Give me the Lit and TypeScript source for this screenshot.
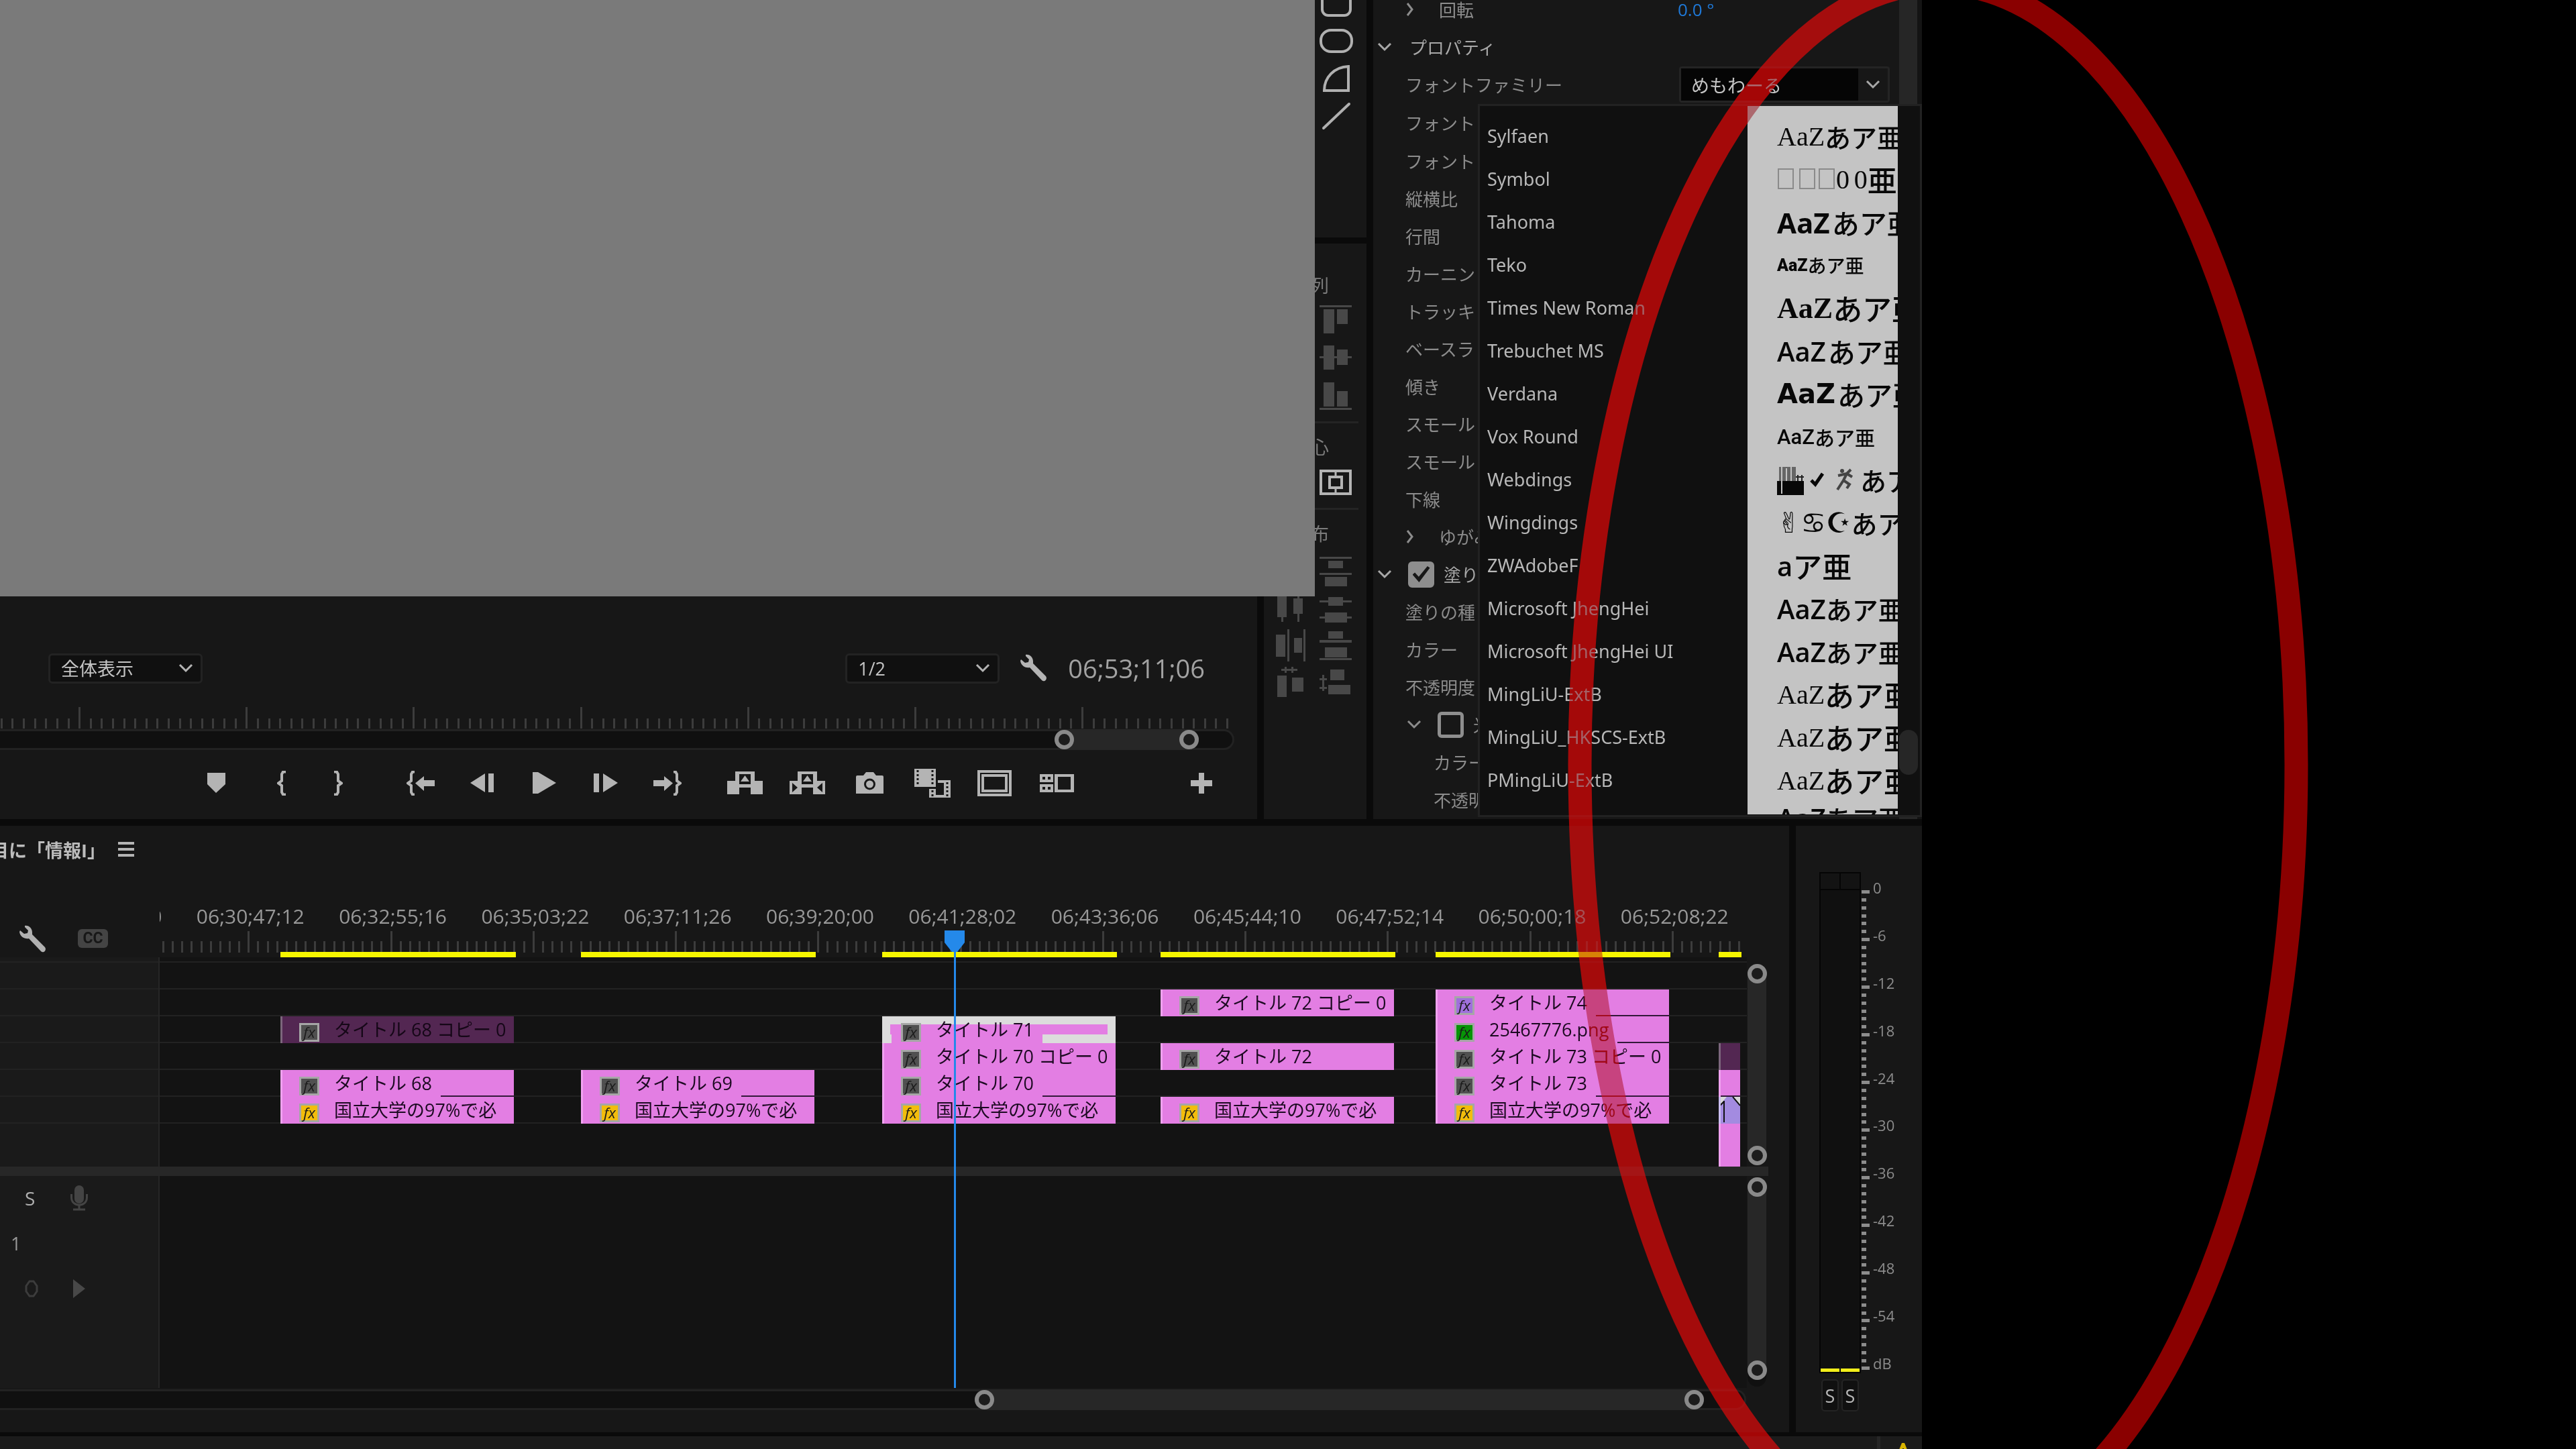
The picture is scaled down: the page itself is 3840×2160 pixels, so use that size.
import { LitElement, html, css, svg, nothing } from "lit";
import { customElement } from "lit/decorators.js";
import { classMap } from "lit/directives/class-map.js";
import { styleMap } from "lit/directives/style-map.js";

type Clip = {
  left: number;
  width: number;
  name?: string;
  fx?: string;
  line?: boolean;
  kind?: string;
};

const LANE_WIDTH = 2366;
const pct = (value: number, total: number) => `${(value / total) * 100}%`;

const G1 = 180, G2 = 628, G3 = 1077, G4 = 1492, G5 = 1902, G6 = 2324;
const W = 348;
const LONG = "国立大学の97%で必";

const TRACKS: Clip[][] = [
  [],
  [
    { left: G4, width: W, name: "タイトル 72 コピー 0", fx: "gray" },
    { left: G5, width: W, name: "タイトル 74", fx: "violet", line: true },
  ],
  [
    { left: G1, width: W, name: "タイトル 68 コピー 0", fx: "gray", kind: "off" },
    { left: G3, width: W, name: "タイトル 71", fx: "gray", kind: "selected" },
    { left: G5, width: W, name: "25467776.png", fx: "green", line: true },
  ],
  [
    { left: G3, width: W, name: "タイトル 70 コピー 0", fx: "gray" },
    { left: G4, width: W, name: "タイトル 72", fx: "gray" },
    { left: G5, width: W, name: "タイトル 73 コピー 0", fx: "gray" },
    { left: G6, width: 32, kind: "off" },
  ],
  [
    { left: G1, width: W, name: "タイトル 68", fx: "gray", line: true },
    { left: G2, width: W, name: "タイトル 69", fx: "gray", line: true },
    { left: G3, width: W, name: "タイトル 70", fx: "gray", line: true },
    { left: G5, width: W, name: "タイトル 73", fx: "gray", line: true },
    { left: G6, width: 32, line: true },
  ],
  [
    { left: G1, width: W, name: LONG, fx: "gold" },
    { left: G2, width: W, name: LONG, fx: "gold" },
    { left: G3, width: W, name: LONG, fx: "gold" },
    { left: G4, width: W, name: LONG, fx: "gold" },
    { left: G5, width: W, name: LONG, fx: "gold" },
    { left: G6, width: 32, kind: "lavender" },
  ],
  [{ left: G6, width: 32 }],
];

const RENDER_BARS = [
  [G1, 351], [G2, 350], [G3, 350], [G4, 350], [G5, 350], [G6, 34],
];

const TIMES = [
  "06;28;39;10", "06;30;47;12", "06;32;55;16", "06;35;03;22", "06;37;11;26",
  "06;39;20;00", "06;41;28;02", "06;43;36;06", "06;45;44;10", "06;47;52;14",
  "06;50;00;18", "06;52;08;22",
];

const FONTS: { name: string; latin?: string; style?: string; kana?: string; size?: string }[] = [
  { name: "Sylfaen", latin: "AaZ", style: "serif", kana: "あア亜", size: "m" },
  { name: "Symbol", style: "boxes", kana: "亜", size: "l" },
  { name: "Tahoma", latin: "AaZ", style: "bold", kana: "あア亜", size: "n" },
  { name: "Teko", latin: "AaZ", style: "tiny", kana: "あア亜", size: "xs" },
  { name: "Times New Roman", latin: "AaZ", style: "serif-bold", kana: "あア亜", size: "l" },
  { name: "Trebuchet MS", latin: "AaZ", style: "semi", kana: "あア亜", size: "n" },
  { name: "Verdana", latin: "AaZ", style: "wide", kana: "あア亜", size: "n" },
  { name: "Vox Round", latin: "AaZ", style: "round", kana: "あア亜", size: "s" },
  { name: "Webdings", style: "web", kana: "あア", size: "m" },
  { name: "Wingdings", latin: "✌♋☪", style: "wing", kana: "あア", size: "m" },
  { name: "ZWAdobeF", latin: "a", style: "semi", kana: "ア亜", size: "l" },
  { name: "Microsoft JhengHei", latin: "AaZ", style: "semi", kana: "あア亜", size: "m" },
  { name: "Microsoft JhengHei UI", latin: "AaZ", style: "semi", kana: "あア亜", size: "m" },
  { name: "MingLiU-ExtB", latin: "AaZ", style: "serif", kana: "あア亜", size: "l" },
  { name: "MingLiU_HKSCS-ExtB", latin: "AaZ", style: "serif", kana: "あア亜", size: "l" },
  { name: "PMingLiU-ExtB", latin: "AaZ", style: "serif", kana: "あア亜", size: "l" },
];

const icon = (w: number, h: number, body: unknown, cls = "") => html`<svg
  class="icon ${cls}" width=${w} height=${h} viewBox="0 0 ${w} ${h}" aria-hidden="true">${body}</svg>`;

const chevronDown = () =>
  icon(22, 14, svg`<path d="M2 2 L11 11 L20 2" fill="none" stroke="currentColor" stroke-width="3"/>`);
const chevronRight = () =>
  icon(22, 22, svg`<path d="M7 2 L14 11 L7 20" fill="none" stroke="currentColor" stroke-width="3"/>`);
const wrench = () =>
  icon(42, 42, svg`<path d="M9 1 C15 0 20 5 20 11 L20 14 L39 33 C42 37 37 43 33 39 L15 20 C9 21 2 18 1 10 L2 8 L8 13 L13 12 L14 8 L9 3 Z" fill="currentColor"/>`);

const ICONS = {
  marker: icon(27, 30, svg`<path d="M0 0H27V17L13 30L0 17Z" fill="currentColor"/>`),
  markIn: icon(14, 37, svg`<path d="M13 1.500H9L7 5V15L2 18.500L7 22V32L9 35.500H13" fill="none" stroke="currentColor" stroke-width="4"/>`),
  markOut: icon(14, 37, svg`<path d="M1 1.500H5L7 5V15L12 18.500L7 22V32L5 35.500H1" fill="none" stroke="currentColor" stroke-width="4"/>`),
  goIn: icon(42, 37, svg`<path d="M12 1.500H9L7 5V15L2 18.500L7 22V32L9 35.500H12" fill="none" stroke="currentColor" stroke-width="4"/><path d="M13 18.500L26 8V14H42V23H26V30Z" fill="currentColor"/>`),
  back: icon(36, 28, svg`<path d="M0 14L22 0V28ZM27 0H35V28H27Z" fill="currentColor"/>`),
  play: icon(35, 32, svg`<path d="M0 0H8L35 16L8 32H0Z" fill="currentColor"/>`),
  forward: icon(36, 28, svg`<path d="M36 14L14 0V28ZM0 0H8V28H0Z" fill="currentColor"/>`),
  goOut: icon(42, 37, svg`<path d="M30 1.500H33L35 5V15L40 18.500L35 22V32L33 35.500H30" fill="none" stroke="currentColor" stroke-width="4"/><path d="M29 18.500L16 8V14H0V23H16V30Z" fill="currentColor"/>`),
  lift: icon(53, 34, svg`<path d="M0 14H12V0H41V14H53V34H35V24H18V34H0Z" fill="currentColor"/><path d="M18 4H35V19H18Z" fill="#171717"/><path d="M26.500 6L33 15H20Z" fill="currentColor"/>`),
  extract: icon(53, 34, svg`<path d="M0 14H12V0H41V14H53V34H35V24H18V34H0Z" fill="currentColor"/><path d="M18 4H35V19H18ZM4 17L12 24L4 31ZM49 17L41 24L49 31Z" fill="#171717"/><path d="M26.500 6L33 15H20Z" fill="currentColor"/>`),
  camera: icon(41, 32, svg`<path d="M0 7Q0 5 2 5H11L15 0H26L30 5H39Q41 5 41 7V32H0Z" fill="currentColor"/><circle cx="20.500" cy="18" r="7" fill="none" stroke="#171717" stroke-width="3"/>`),
  film: icon(54, 43, svg`<path d="M0 0H32V27H0Z" fill="currentColor"/><path d="M5 2V26M27 2V26" stroke="#171717" stroke-width="3" stroke-dasharray="3 3"/><path d="M35 17H54V43H22V30H32V39H44V21H35Z" fill="currentColor"/><path d="M49 20V41M27 32V41" stroke="#171717" stroke-width="3" stroke-dasharray="3 3"/>`),
  safe: icon(51, 39, svg`<path d="M2 2H49V37H2Z" fill="none" stroke="currentColor" stroke-width="4"/><path d="M8 8H43V31H8Z" fill="none" stroke="currentColor" stroke-width="4"/>`),
  multi: icon(51, 27, svg`<path d="M0 0H20V12H0ZM0 15H20V27H0ZM22 0H51V27H22ZM27 4V23H46V4Z" fill="currentColor" fill-rule="evenodd"/><path d="M4 4H8V8H4ZM12 4H16V8H12ZM4 19H8V23H4ZM12 19H16V23H12Z" fill="#171717"/>`),
  plus: icon(32, 31, svg`<path d="M12 0H20V11H32V20H20V31H12V20H0V11H12Z" fill="currentColor"/>`),
  mic: icon(26, 38, svg`<rect x="6" y="0" width="14" height="27" rx="7" fill="currentColor"/><path d="M1.500 13V18C1.500 33 24.500 33 24.500 18V13M13 29V36M4 36H22" fill="none" stroke="currentColor" stroke-width="3"/>`),
};

const ALIGN = [
  icon(48, 44, svg`<path d="M0 1H48V4H0ZM6 7H22V43H6ZM26 7H42V29H26Z" fill="currentColor"/>`),
  icon(48, 44, svg`<path d="M0 20H48V23H0ZM6 4H22V40H6ZM26 10H42V33H26Z" fill="currentColor"/>`),
  icon(48, 44, svg`<path d="M0 40H48V43H0ZM6 2H22V38H6ZM26 15H42V38H26Z" fill="currentColor"/>`),
];

const DISTRIBUTE = [
  nothing,
  icon(48, 46, svg`<path d="M0 1H48V4H0ZM13 7H35V18H13ZM0 25H48V28H0ZM8 31H41V45H8Z" fill="currentColor"/>`),
  icon(46, 46, svg`<path d="M3 2H17V36H3ZM9 36H12V43H9ZM27 8H41V31H27ZM33 2H36V43H33Z" fill="currentColor"/>`),
  icon(48, 46, svg`<path d="M0 11H48V14H0ZM13 6H35V19H13ZM0 35H48V38H0ZM8 29H41V44H8Z" fill="currentColor"/>`),
  icon(46, 48, svg`<path d="M1 8H15V41H1ZM18 0H21V48H18ZM28 13H40V35H28ZM42 0H45V48H42Z" fill="currentColor"/>`),
  icon(48, 46, svg`<path d="M13 2H35V13H13ZM0 15H48V19H0ZM8 26H41V41H8ZM0 42H48V45H0Z" fill="currentColor"/>`),
  icon(46, 46, svg`<path d="M3 13H17V45H3ZM25 16H42V37H25ZM9 3H33V6H9ZM14 0H17V9H14ZM24 0H27V9H24Z" fill="currentColor"/>`),
  icon(48, 46, svg`<path d="M16 4H37V20H16ZM13 27H46V41H13ZM4 12H7V36H4ZM0 17H11V20H0ZM0 30H11V33H0Z" fill="currentColor"/>`),
];

function ticks(count: number, start: number, step: number, majorEvery: number, majorTop: number, minorTop: number, bottom: number) {
  const out = [];
  for (let i = 0; i < count; i++) {
    const top = i % majorEvery === 0 ? majorTop : minorTop;
    out.push(svg`<rect x=${Math.round(start + i * step)} y=${top} width="3" height=${bottom - top} fill="#3c3c3c"/>`);
  }
  return out;
}

const ring = (left: number, width: number) => html`<div class="thumb" style=${styleMap({ left: left + "%", width: width + "%" })}>
  <span class="knob"></span><span class="knob"></span>
</div>`;

const baseStyles = css`
  * { box-sizing: border-box; }
  .icon { display: block; flex: none; }
  button {
    border: 0; padding: 0; margin: 0; background: none; color: inherit; font: inherit;
    display: flex; align-items: center; justify-content: center;
  }
  .bar {
    position: relative; height: 31px; background: #101010;
    border: 3px solid #222; border-left: 0; border-radius: 0 16px 16px 0;
  }
  .thumb {
    position: absolute; top: -3px; height: 31px; background: #272727; border-radius: 16px;
    display: flex; justify-content: space-between; align-items: center;
  }
  .thumb.tall { flex-direction: column; }
  .knob { width: 29px; height: 29px; border: 6px solid #8a8a8a; border-radius: 50%; background: #1c1c1c; }
`;

@customElement("program-monitor")
export class ProgramMonitor extends LitElement {
  static styles = [baseStyles, css`
    :host { display: flex; flex-direction: column; background: #171717; min-width: 0; color: #b4b4b4; }
    .viewer { flex: 1; background: #7a7a7a; margin-right: -86px; position: relative; z-index: 1; }
    .controls { display: flex; align-items: center; margin: 84px 78px 35px 72px; height: 46px; gap: 30px; }
    .pick { display: grid; width: 230px; height: 45px; align-items: center; }
    .pick select {
      grid-area: 1 / 1; width: 100%; height: 100%; appearance: none; color: #c4c4c4;
      background: #101010; border: 3px solid #232323; border-radius: 6px; padding: 0 16px;
      font: 27px "Open Sans", "Noto Sans CJK JP", sans-serif;
    }
    .pick .icon { grid-area: 1 / 1; justify-self: end; margin-right: 14px; pointer-events: none; }
    .push { margin-left: auto; }
    .time { font-size: 38px; line-height: 46px; color: #a2a2a2; }
    .ruler { display: block; width: calc(100% - 34px); height: 33px; }
    .bar { margin-right: 34px; }
    .transport { display: flex; height: 103px; padding: 0 37px 5px 276px; }
    .group { display: flex; }
    .group button { width: 92px; }
    .marks button { width: 84px; }
    .marks { margin-left: 10px; }
    .steps { margin-left: 35px; }
    .edits { margin-left: 23px; }
    .edits button { width: 93px; }
    .group.push { margin-left: auto; }
  `];

  render() {
    const b = (label: string, body: unknown) => html`<button aria-label=${label}>${body}</button>`;
    return html`
      <div class="viewer"></div>
      <div class="controls">
        <label class="pick"><select aria-label="表示"><option>全体表示</option></select>${chevronDown()}</label>
        <label class="pick push"><select aria-label="解像度"><option>1/2</option></select>${chevronDown()}</label>
        <button aria-label="設定">${wrench()}</button>
        <span class="time">06;53;11;06</span>
      </div>
      <svg class="ruler" viewBox="0 0 1840 33" preserveAspectRatio="none" aria-hidden="true">
        ${ticks(119, -132, 16.61, 15, 0, 17, 32)}
      </svg>
      <div class="bar">${ring(85.6, 11.7)}</div>
      <div class="transport">
        <div class="group">${b("マーカー", ICONS.marker)}</div>
        <div class="group marks">${b("イン", ICONS.markIn)}${b("アウト", ICONS.markOut)}</div>
        <div class="group steps">
          ${b("インへ移動", ICONS.goIn)}${b("前のフレーム", ICONS.back)}${b("再生", ICONS.play)}
          ${b("次のフレーム", ICONS.forward)}${b("アウトへ移動", ICONS.goOut)}
        </div>
        <div class="group edits">
          ${b("リフト", ICONS.lift)}${b("抽出", ICONS.extract)}${b("フレーム書き出し", ICONS.camera)}
          ${b("比較", ICONS.film)}${b("セーフマージン", ICONS.safe)}${b("マルチカメラ", ICONS.multi)}
        </div>
        <div class="group push">${b("追加", ICONS.plus)}</div>
      </div>`;
  }
}

@customElement("tool-column")
export class ToolColumn extends LitElement {
  static styles = [baseStyles, css`
    :host { display: flex; flex-direction: column; gap: 9px; background: #0a0a0a; overflow: hidden; }
    .tools { height: 354px; background: #171717; color: #b0b0b0; padding-right: 20px; }
    .list { display: flex; flex-direction: column; align-items: flex-end; margin-top: -23px; }
    .list button { width: 50px; height: 56px; }
    .align { flex: 1; background: #171717; color: #484848; padding: 42px 12px 0 0; }
    .head { font-size: 27px; line-height: 42px; text-align: right; color: #7c7c7c; padding-right: 44px; }
    .stack { display: flex; flex-direction: column; align-items: flex-end; padding-right: 10px; }
    .stack button { width: 48px; height: 57px; }
    .stack.center { color: #b4b4b4; padding: 9px 10px 6px 0; }
    .center button { height: 44px; }
    hr { border: 0; height: 3px; background: #242424; margin: 10px 0 15px; }
    .spread { display: grid; grid-template-columns: 46px 48px; column-gap: 20px; grid-auto-rows: 55px; justify-content: end; padding: 7px 10px 0 0; }
    .spread > * { place-self: center; }
  `];

  render() {
    const t = (label: string, w: number, h: number, body: unknown) =>
      html`<button aria-label=${label}>${icon(w, h, body)}</button>`;
    return html`
      <div class="tools">
        <div class="list">
          ${t("角丸長方形", 46, 44, svg`<rect x="2" y="2" width="42" height="38" rx="9" fill="none" stroke="currentColor" stroke-width="4"/>`)}
          ${t("楕円", 50, 36, svg`<rect x="2" y="2" width="46" height="32" rx="15" fill="none" stroke="currentColor" stroke-width="4"/>`)}
          ${t("円弧", 42, 40, svg`<path d="M39 2V38H3C3 18 18 3 39 2Z" fill="none" stroke="currentColor" stroke-width="4"/>`)}
          ${t("ライン", 44, 42, svg`<path d="M3 39L41 3" fill="none" stroke="currentColor" stroke-width="4" stroke-linecap="round"/>`)}
        </div>
      </div>
      <div class="align">
        <div class="head">列</div>
        <div class="stack">${ALIGN.map((a, i) => html`<button aria-label="整列 ${i + 1}">${a}</button>`)}</div>
        <hr />
        <div class="head">心</div>
        <div class="stack center">
          ${t("中央", 48, 38, svg`<rect x="2" y="2" width="44" height="34" fill="none" stroke="currentColor" stroke-width="4"/><rect x="15" y="11" width="18" height="16" fill="none" stroke="currentColor" stroke-width="4"/><path d="M24 4V11M24 27V34" stroke="currentColor" stroke-width="3"/>`)}
        </div>
        <hr />
        <div class="head">布</div>
        <div class="spread">${DISTRIBUTE.map((d, i) => html`<button aria-label="分布 ${i + 1}">${d}</button>`)}</div>
      </div>`;
  }
}

@customElement("title-properties")
export class TitleProperties extends LitElement {
  static styles = [baseStyles, css`
    :host { display: flex; position: relative; background: #171717; color: #8c8c8c; min-width: 0; overflow: hidden; font-size: 26px; }
    .rows { flex: 1; margin-top: -14px; min-width: 0; }
    .row { display: flex; align-items: center; height: 56px; padding-left: 48px; white-space: nowrap; }
    .row.tall { height: 57px; }
    .row.top { padding-left: 6px; gap: 26px; }
    .row.nested { padding-left: 44px; gap: 32px; }
    .row.deep { padding-left: 90px; }
    .row.fold { padding-left: 50px; gap: 24px; }
    .strong { color: #a8a8a8; }
    .row.check { gap: 24px; }
    .row .value { margin-left: auto; width: 330px; color: #1f79d8; }
    .combo { display: flex; margin-left: auto; margin-right: 14px; width: 314px; height: 54px; border: 3px solid #242424; border-radius: 4px; color: #a8a8a8; }
    .combo input { flex: 1; min-width: 0; border: 0; background: #050505; color: #c4c4c4; padding: 0 15px; font: 27px "Open Sans", "Noto Sans CJK JP", sans-serif; }
    .combo button { width: 44px; }
    label { display: flex; align-items: center; gap: 14px; }
    input[type="checkbox"] {
      appearance: none; margin: 0; width: 39px; height: 39px; border: 5px solid #8e8e8e; border-radius: 6px; display: grid; place-content: center;
    }
    input[type="checkbox"]:checked { background: #8e8e8e; }
    input[type="checkbox"]:checked::before {
      content: ""; width: 26px; height: 24px; background: #171717;
      clip-path: polygon(0 52%, 14% 40%, 36% 66%, 86% 0, 100% 10%, 38% 100%);
    }
    .rail { width: 34px; padding-right: 7px; background: #141414; }
    .rail div { height: 100%; background: #262626; }
    .menu {
      position: absolute; left: 156px; right: 0; top: 155px; bottom: 3px;
      background: #101010; border: 3px solid #222; display: flex; overflow: hidden;
    }
    ul { list-style: none; margin: 0; padding: 13px 0 0 11px; flex: 1; min-width: 0; color: #b8b8b8; }
    li { height: 64px; line-height: 64px; white-space: nowrap; }
    .names li { font-family: "Noto Sans", "Open Sans", sans-serif; font-size: 27px; }
    .preview { flex: none; width: 224px; margin-bottom: 1px; background: #c4c4c4; color: #080808; padding: 13px 0 0 44px; overflow: hidden; }
    .preview li { display: flex; align-items: center; }
    .preview li:last-child { height: 48px; }
    .serif { font: 40px "Liberation Serif", serif; }
    .serif-bold { font: bold 44px "Liberation Serif", serif; }
    .bold { font: bold 42px "Open Sans", sans-serif; }
    .semi { font: 600 40px "Open Sans", sans-serif; }
    .wide { font: bold 40px "DejaVu Sans", sans-serif; }
    .round { font: 500 31px Roboto, sans-serif; }
    .tiny { font: 900 25px Roboto, sans-serif; }
    .wing { font: 42px "DejaVu Sans", sans-serif; }
    .kana { font-family: "Noto Sans CJK JP", sans-serif; font-weight: 500; }
    .kana.m { font-size: 39px; }
    .kana.n { font-size: 41px; padding-left: 3px; }
    .kana.l { font-size: 44px; }
    .kana.s { font-size: 30px; }
    .kana.xs { font-size: 28px; }
    .track { width: 33px; padding: 930px 3px 0 2px; }
    .track div { height: 67px; background: #262626; border-radius: 14px; }
  `];

  private row(label: string, cls = "") {
    return html`<div class="row ${cls}"><span>${label}</span></div>`;
  }

  private sample(f: (typeof FONTS)[number]) {
    if (f.style === "boxes") {
      return html`${icon(88, 34, svg`<path d="M2 2H24V31H2ZM34 2H56V31H34ZM63 2H85V31H63Z" fill="none" stroke="#8a8a8a" stroke-width="2"/>`)}
        <span class="serif">0</span>&nbsp;<span class="serif">0</span><span class="kana l">${f.kana}</span>`;
    }
    if (f.style === "web") {
      return html`${icon(124, 46, svg`<path d="M0 25H40V46H0Z" fill="currentColor"/><path d="M3 4H28V25H3Z" fill="#666"/><path d="M7 4V44M14 6V25M21 4V25" stroke="#c4c4c4" stroke-width="2"/><path d="M31 25V16M37 25V16M28 19H40" stroke="#222" stroke-width="2"/><path d="M51 24L57 30L68 14" fill="none" stroke="currentColor" stroke-width="5"/><path d="M110 8L104 14M104 14L99 24L90 38M99 24L108 30L104 36M91 17L104 14L112 19" fill="none" stroke="#444" stroke-width="4"/><circle cx="97" cy="10" r="3" fill="#444"/>`)}
        <span class="kana m">${f.kana}</span>`;
    }
    return html`<span class=${f.style ?? ""}>${f.latin}</span><span class="kana ${f.size}">${f.kana}</span>`;
  }

  render() {
    return html`
      <div class="rows">
        <div class="row nested">${chevronRight()}<span>回転</span><span class="value">0.0 °</span></div>
        <div class="row top strong">${chevronDown()}<span>プロパティ</span></div>
        <div class="row"><span>フォントファミリー</span>
          <div class="combo"><input aria-label="フォントファミリー" value="めもわーる" /><button aria-label="開く">${chevronDown()}</button></div>
        </div>
        ${this.row("フォント", "tall")}${this.row("フォント", "tall")}
        ${["縦横比", "行間", "カーニン", "トラッキ", "ベースラ", "傾き", "スモール", "スモール", "下線"].map((l) => this.row(l))}
        <div class="row nested">${chevronRight()}<span>ゆがみ</span></div>
        <div class="row top strong check">${chevronDown()}<label><input type="checkbox" checked />塗り</label></div>
        ${["塗りの種", "カラー", "不透明度"].map((l) => this.row(l))}
        <div class="row fold">${chevronDown()}<label><input type="checkbox" />光</label></div>
        ${this.row("カラー", "deep")}${this.row("不透明", "deep")}
      </div>
      <div class="rail"><div></div></div>
      <div class="menu">
        <ul class="names">${FONTS.map((f) => html`<li>${f.name}</li>`)}</ul>
        <ul class="preview">
          ${FONTS.map((f) => html`<li>${this.sample(f)}</li>`)}
          <li><span class="semi">AaZ</span><span class="kana m">あア亜</span></li>
        </ul>
        <div class="track"><div></div></div>
      </div>`;
  }
}

@customElement("timeline-panel")
export class TimelinePanel extends LitElement {
  static styles = [baseStyles, css`
    :host {
      display: grid; min-width: 0; min-height: 0; background: #171717; color: #b0b0b0;
      grid-template-columns: 238px minmax(0, 1fr) 63px;
      grid-template-rows: 70px 126px 312px 14px minmax(0, 1fr) 66px;
      overflow: hidden;
    }
    .title { grid-column: 1 / -1; display: flex; align-items: center; gap: 25px; margin-left: -14px; white-space: nowrap; font-size: 27px; font-weight: 700; color: #bcbcbc; }
    .title span { width: 165px; }
    .bars { width: 24px; height: 22px; display: flex; flex-direction: column; justify-content: space-between; }
    .bars i { height: 4px; background: #b4b4b4; }
    .tools { display: flex; gap: 46px; padding: 78px 0 0 28px; align-items: flex-start; }
    .cc { width: 45px; height: 28px; margin-top: 6px; border-radius: 6px; background: #444; color: #171717; font: bold 23px/28px Roboto, sans-serif; }
    .scale { position: relative; grid-column: 2; overflow: hidden; }
    .scale time { position: absolute; top: 45px; width: 164px; margin-left: -78px; text-align: center; font-size: 30px; line-height: 40px; color: #989898; white-space: nowrap; }
    .scale svg { position: absolute; left: 0; bottom: 6px; width: 100%; height: 33px; }
    .render { position: absolute; bottom: 0; height: 8px; background: #f6f600; }
    .gutter { grid-column: 3; padding: 10px 34px 2px 1px; }
    .gutter.second { padding-top: 2px; }
    .zoom { position: relative; height: 100%; width: 28px; background: #101010; border-radius: 14px; }
    .zoom .thumb { position: absolute; top: 0; width: 28px; border-radius: 14px; align-items: center; }
    .zoom .long { height: 100%; }
    .zoom .most { height: 302px; }
    .heads { background: #1a1a1a; border-right: 2px solid #262626; }
    .lanes { background: #131313; min-width: 0; }
    .lane { position: relative; height: 40px; border-bottom: 2px solid #222; }
    .lane.pad { height: 8px; }
    .lane.last { height: 64px; border: 0; }
    .clip { position: absolute; top: 0; height: 40px; background: #e37ee3; color: #1d0a22; border-left: 3px solid #f0a2f0; overflow: hidden; }
    .last .clip { height: 64px; }
    .clip.line { background: linear-gradient(#e37ee3 38px, #33183a 38px); }
    .clip.off { background: #532752; border-left-color: #7c667c; color: #150717; }
    .clip.lavender { background: #a38be0; border-left-color: #cabdf0; }
    .clip.selected { background: linear-gradient(#e37ee3, #e37ee3) 9px 12px / calc(100% - 21px) 15px no-repeat #dcdcdc; border-left-color: #dcdcdc; }
    .body { display: inline-flex; height: 40px; align-items: flex-start; background: #e37ee3; padding: 0 13px 0 25px; white-space: nowrap; gap: 22px; }
    .off .body { background: none; }
    .selected .body { background: linear-gradient(transparent 12px, #e37ee3 12px); margin-left: 11px; padding-left: 14px; }
    .name { font-size: 27px; line-height: 40px; }
    .fx { width: 30px; height: 28px; margin-top: 10px; border: 3px solid #a6a6a6; background: #505050; color: #1a1a1a; font: italic 22px/20px "Open Sans", sans-serif; text-align: center; }
    .fx.gold { background: #f2bd0c; }
    .fx.green { background: #079407; }
    .fx.violet { background: #a070dc; }
    .corner { display: block; width: 100%; height: 40px; }
    .split { grid-column: 1 / -1; background: #272727; margin-right: 31px; }
    .audio { display: grid; grid-template-columns: 40px 60px; grid-template-rows: 66px 68px 68px; padding-left: 37px; align-items: center; align-content: start; color: #444; }
    .audio b { font: 28px "Open Sans", sans-serif; color: #b0b0b0; }
    .audio .num { grid-column: 1 / -1; margin-left: -21px; font-size: 27px; color: #989898; }
    .audio button { width: 26px; margin-left: 28px; }
    .hscroll { grid-column: 1 / -1; padding: 2px 64px 0 0; }
    .over { grid-column: 2; grid-row: 2 / 6; position: relative; pointer-events: none; }
    .play { position: absolute; top: 86px; bottom: 0; width: 30px; margin-left: -16px; display: flex; flex-direction: column; align-items: center; }
    .play i { flex: 1; width: 3px; background: #2489ea; margin-top: -12px; }
    .r2 { grid-row: 2; } .r3 { grid-row: 3; } .r4 { grid-row: 4; } .r5 { grid-row: 5; } .r6 { grid-row: 6; }
    .c1 { grid-column: 1; } .c2 { grid-column: 2; }
  `];

  private clip(c: Clip) {
    const classes = { clip: true, line: !!c.line, [c.kind ?? "plain"]: true };
    return html`<div class=${classMap(classes)} style=${styleMap({ left: pct(c.left, LANE_WIDTH), width: pct(c.width, LANE_WIDTH) })}>
      ${c.name ? html`<div class="body"><span class="fx ${c.fx}">fx</span><span class="name">${c.name}</span></div>` : nothing}
      ${c.kind === "lavender"
        ? html`<svg class="corner" viewBox="0 0 29 40" preserveAspectRatio="none" aria-hidden="true"><path d="M0 0H9L-2 13ZM18 0H29V12Z" fill="#d8d8d8"/><path d="M-2 14L5 7M18 0L29 13" stroke="#111" stroke-width="2" fill="none"/><path d="M4 6H6V38H4Z" fill="#111"/></svg>`
        : nothing}
    </div>`;
  }

  render() {
    return html`
      <div class="title"><span>目に「情報I」</span><button aria-label="メニュー"><div class="bars"><i></i><i></i><i></i></div></button></div>
      <div class="tools r2 c1"><button aria-label="設定">${wrench()}</button><button class="cc" aria-label="字幕">CC</button></div>
      <div class="scale r2">
        ${TIMES.map((t, i) => html`<time style=${styleMap({ left: pct(-81 + i * 212.3, LANE_WIDTH) })}>${t}</time>`)}
        <svg viewBox="0 0 2366 33" preserveAspectRatio="none" aria-hidden="true">${ticks(173, -81, 14.15, 15, 0, 15, 32)}</svg>
        ${RENDER_BARS.map(([l, w]) => html`<div class="render" style=${styleMap({ left: pct(l, LANE_WIDTH), width: pct(w, LANE_WIDTH) })}></div>`)}
      </div>
      <div class="heads r3 c1">
        <div class="lane pad"></div>
        ${TRACKS.map((_, i) => html`<div class="lane ${i === 6 ? "last" : ""}"></div>`)}
      </div>
      <div class="lanes r3 c2">
        <div class="lane pad"></div>
        ${TRACKS.map((clips, i) => html`<div class="lane ${i === 6 ? "last" : ""}">${clips.map((c) => this.clip(c))}</div>`)}
      </div>
      <div class="gutter r3"><div class="zoom"><div class="thumb tall long"><span class="knob"></span><span class="knob"></span></div></div></div>
      <div class="split r4"></div>
      <div class="heads audio r5 c1">
        <b>S</b><button aria-label="録音">${ICONS.mic}</button>
        <span class="num">1</span>
        ${icon(20, 26, svg`<path d="M7 2H13L18 9V17L13 24H7L2 17V9Z" fill="none" stroke="#3c3c3c" stroke-width="3"/>`)}
        <button aria-label="次のキーフレーム">${icon(18, 28, svg`<path d="M0 0L18 14L0 28Z" fill="#484848"/>`)}</button>
      </div>
      <div class="lanes r5 c2"></div>
      <div class="gutter r5 second"><div class="zoom"><div class="thumb tall most"><span class="knob"></span><span class="knob"></span></div></div></div>
      <div class="hscroll r6"><div class="bar">${ring(55.9, 41.8)}</div></div>
      <div class="over"><div class="play" style=${styleMap({ left: pct(1186, LANE_WIDTH) })}>
        ${icon(30, 32, svg`<path d="M0 0H30V18L19 32H11L0 18Z" fill="#2489ea"/>`)}<i></i>
      </div></div>`;
  }
}

@customElement("audio-meter")
export class AudioMeter extends LitElement {
  static styles = [baseStyles, css`
    :host { display: grid; background: #171717; grid-template-columns: 62px 18px 1fr; grid-template-rows: minmax(0, 1fr) 57px; padding: 69px 0 31px 35px; }
    .meter { border: 2px solid #050505; background: #101010; display: grid; grid-template-columns: 1fr 1fr; grid-template-rows: 25px 1fr 5px; column-gap: 2px; }
    .meter .peak { background: #131313; border-bottom: 2px solid #050505; }
    .meter .peak:first-child { box-shadow: 2px 0 #050505; }
    .fill { grid-column: 1 / -1; }
    .level { background: #f2ee1a; }
    .marks { width: 18px; height: 100%; display: block; }
    .scale { display: flex; flex-direction: column; justify-content: space-between; padding: 11px 0 3px; font: 22px/24px "Open Sans", sans-serif; color: #8c8c8c; }
    .solo { display: flex; gap: 4px; padding: 9px 0 0 3px; }
    .solo button { width: 26px; height: 48px; border: 2px solid #242424; border-radius: 5px; background: #101010; color: #b8b8b8; font: 27px "Open Sans", sans-serif; }
  `];

  render() {
    const marks = [];
    for (let i = 0; i <= 60; i++) {
      const y = Math.round(29 + i * 11.84);
      marks.push(svg`<rect x="1" y=${y - 2} width=${i % 6 === 0 ? 12 : 7} height="5" fill="#8c8c8c"/>`);
    }
    return html`
      <div class="meter">
        <div class="peak"></div><div class="peak"></div><div class="fill"></div>
        <div class="level"></div><div class="level"></div>
      </div>
      <svg class="marks" viewBox="0 0 18 747" preserveAspectRatio="none" aria-hidden="true">${marks}</svg>
      <div class="scale">${["0", "-6", "-12", "-18", "-24", "-30", "-36", "-42", "-48", "-54", "dB"].map((t) => html`<span>${t}</span>`)}</div>
      <div class="solo"><button>S</button><button>S</button></div>`;
  }
}

@customElement("app-root")
export class AppRoot extends LitElement {
  static styles = css`
    * { box-sizing: border-box; }
    :host {
      display: grid; position: relative; width: 100%; height: 100vh; overflow: hidden; background: #000;
      grid-template-columns: 2865fr 975fr;
      font-family: "Open Sans", "Noto Sans CJK JP", sans-serif;
    }
    .ring { position: absolute; left: 0; top: 0; width: 100vw; height: 100vh; pointer-events: none; }
    .shade { mix-blend-mode: multiply; z-index: 3; }
    .glow { mix-blend-mode: lighten; z-index: 4; }
    .app {
      position: relative; isolation: isolate; overflow: hidden; background: #0a0a0a; min-width: 0;
      display: grid; grid-template-rows: minmax(0, 1221fr) 10px minmax(0, 904fr) 6px minmax(0, 19fr);
    }
    .upper { grid-row: 1; display: grid; grid-template-columns: minmax(0, 1fr) 153px 818px; column-gap: 10px; min-height: 0; }
    .lower { grid-row: 3; display: grid; grid-template-columns: minmax(0, 1fr) 188px; column-gap: 10px; min-height: 0; }
    .status { grid-row: 5; background: #1b1b1b; display: flex; justify-content: flex-end; overflow: hidden; }
    .alert { width: 67px; border-left: 5px solid #262626; padding: 10px 0 0 24px; overflow: hidden; }
    .alert svg { display: block; }
  `;

  private ellipse(cls: string, color: string) {
    return html`<svg class="ring ${cls}" viewBox="0 0 3840 2160" preserveAspectRatio="none" aria-hidden="true">
      <ellipse cx="2889" cy="1140" rx="534" ry="1165" fill="none" stroke=${color} stroke-width="35"></ellipse>
    </svg>`;
  }

  render() {
    return html`
      ${this.ellipse("", "#8a0000")}
      <main class="app">
        <div class="upper">
          <program-monitor></program-monitor>
          <tool-column></tool-column>
          <title-properties></title-properties>
        </div>
        <div class="lower">
          <timeline-panel></timeline-panel>
          <audio-meter></audio-meter>
        </div>
        <div class="status"><div class="alert">
          <svg width="20" height="20" viewBox="0 0 20 20" aria-hidden="true"><path d="M8 0H12L20 20H0Z" fill="#d8b400"/><path d="M9 8H11V20H9Z" fill="#222"/></svg>
        </div></div>
        ${this.ellipse("shade", "#e0878f")}
        ${this.ellipse("glow", "#a40606")}
      </main>`;
  }
}
